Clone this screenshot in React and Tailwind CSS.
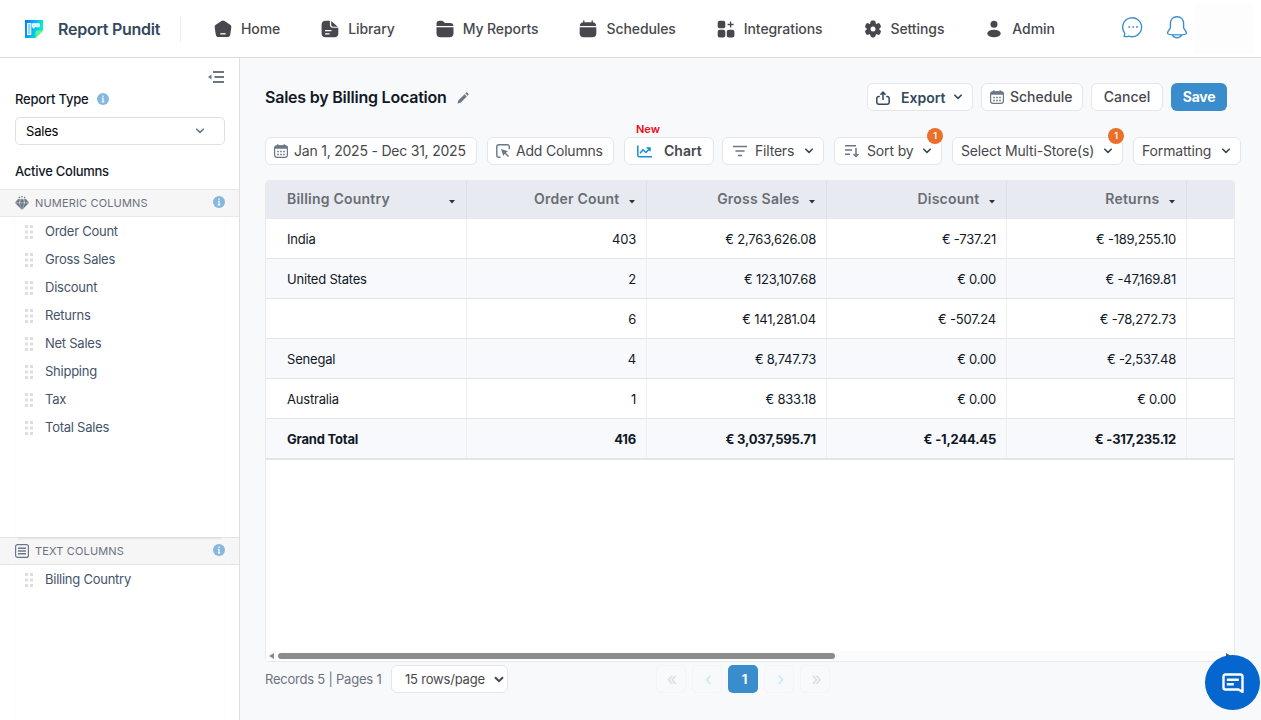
// src/App.jsx
import React, { useState } from 'react';

const NAV_ITEMS = [
  { label: 'Home', icon: HomeIcon },
  { label: 'Library', icon: LibraryIcon },
  { label: 'My Reports', icon: FolderIcon },
  { label: 'Schedules', icon: ScheduleIcon },
  { label: 'Integrations', icon: IntegrationsIcon },
  { label: 'Settings', icon: SettingsIcon },
  { label: 'Admin', icon: AdminIcon },
];

const NUMERIC_COLUMNS = ['Order Count', 'Gross Sales', 'Discount', 'Returns', 'Net Sales', 'Shipping', 'Tax', 'Total Sales'];

const HEADERS = ['Billing Country', 'Order Count', 'Gross Sales', 'Discount', 'Returns'];

const ROWS = [
  ['India', '403', '€ 2,763,626.08', '€ -737.21', '€ -189,255.10'],
  ['United States', '2', '€ 123,107.68', '€ 0.00', '€ -47,169.81'],
  ['', '6', '€ 141,281.04', '€ -507.24', '€ -78,272.73'],
  ['Senegal', '4', '€ 8,747.73', '€ 0.00', '€ -2,537.48'],
  ['Australia', '1', '€ 833.18', '€ 0.00', '€ 0.00'],
  ['Grand Total', '416', '€ 3,037,595.71', '€ -1,244.45', '€ -317,235.12'],
];

function HomeIcon() {
  return (
    <svg width="18" height="18" viewBox="0 0 18 18">
      <path d="M7.500 1a2.600 2.600 0 0 1 3 0l5.700 3.700c.9.600 1.300 1.500 1.100 2.600l-1 6.900a3.300 3.300 0 0 1-3.300 2.900H5a3.300 3.300 0 0 1-3.300-2.900L.7 7.300c-.2-1.100.2-2 1.100-2.600z" fill="#47484d" />
      <path d="M6.300 13.800h5.400" stroke="#fff" strokeWidth="1.300" />
    </svg>
  );
}

function LibraryIcon() {
  return (
    <svg width="18" height="18" viewBox="0 0 18 18">
      <path d="M4.500.7h4.400v4.100c0 2.100 1 3 3 3h5.400v5.700c0 2.500-1.300 3.700-3.700 3.700H4.500C2.100 17.200.6 16 .6 13.500v-9C.6 2 2.100.7 4.500.7z" fill="#47484d" />
      <path d="M10.200 1.100l6.600 5.600h-4.400c-1.500 0-2.200-.7-2.200-2.200z" fill="#47484d" />
      <path d="M4 10.600h6.500M4 13.800h4.500" stroke="#fff" strokeWidth="1.300" />
    </svg>
  );
}

function FolderIcon() {
  return (
    <svg width="18" height="18" viewBox="0 0 18 18">
      <path d="M.5 6V3.600C.5 1.800 1.500.7 3.400.7h2c1 0 1.700.4 2.300 1.100l1 1.300h5.600c2 0 3.200 1 3.200 2.900z" fill="#47484d" />
      <path d="M.5 7.200h17v6c0 2.700-1.300 4-4 4h-9c-2.700 0-4-1.300-4-4z" fill="#47484d" />
    </svg>
  );
}

function ScheduleIcon() {
  return (
    <svg width="18" height="18" viewBox="0 0 18 18">
      <path d="M.8 6C.8 3.500 2.200 2.200 4.600 2.200h8.800c2.400 0 3.800 1.300 3.800 3.800z" fill="#47484d" />
      <path d="M.7 7.200h16.600v6c0 2.700-1.300 4-4 4H4.700c-2.700 0-4-1.300-4-4z" fill="#47484d" />
      <path d="M4.800.8v2M13.200.8v2" stroke="#47484d" strokeWidth="1.300" strokeLinecap="round" />
    </svg>
  );
}

function IntegrationsIcon() {
  return (
    <svg width="18" height="18" viewBox="0 0 18 18" fill="#47484d">
      <rect x=".7" y=".7" width="7.600" height="7.600" rx="2" />
      <rect x=".7" y="9.800" width="7.600" height="7.600" rx="2" />
      <rect x="9.800" y="9.800" width="7.600" height="7.600" rx="2" />
      <path d="M13.600 1.500v6M10.600 4.500h6" stroke="#47484d" strokeWidth="1.300" />
    </svg>
  );
}

function SettingsIcon() {
  return (
    <svg width="18" height="18" viewBox="0 0 18 18">
      <g fill="#47484d">
        <circle cx="9" cy="9" r="6.300" />
        <rect x="6.400" y=".6" width="5.200" height="16.800" rx="1.800" />
        <rect x="6.400" y=".6" width="5.200" height="16.800" rx="1.800" transform="rotate(60 9 9)" />
        <rect x="6.400" y=".6" width="5.200" height="16.800" rx="1.800" transform="rotate(120 9 9)" />
      </g>
      <circle cx="9" cy="9" r="2.500" fill="#fff" />
    </svg>
  );
}

function AdminIcon() {
  return (
    <svg width="18" height="18" viewBox="0 0 18 18" fill="#47484d">
      <circle cx="9" cy="4.200" r="3.500" />
      <ellipse cx="9" cy="13.500" rx="6.700" ry="3.800" />
    </svg>
  );
}

function CalendarIcon() {
  return (
    <svg width="14" height="14" viewBox="0 0 14 14" className="shrink-0">
      <rect x=".6" y="1.800" width="12.800" height="11.500" rx="2.200" fill="none" stroke="#6b7785" strokeWidth="1.200" />
      <path d="M.5 4.800V3.500C.5 2.500 1.300 1.600 2.500 1.600h9c1.200 0 2 .9 2 1.900v1.300z" fill="#6b7785" />
      <path d="M3.800.3v2M10.200.3v2" stroke="#6b7785" strokeWidth="1.300" />
      <path d="M3.200 7.600h8M3.200 10.400h8" stroke="#6b7785" strokeWidth="1.500" strokeDasharray="1.600 1.400" />
    </svg>
  );
}

function ChevronDown({ color = '#34495e' }) {
  return (
    <svg width="8" height="6" viewBox="0 0 8 6" fill="none" className="shrink-0">
      <path d="M.8 1.200L4 4.400l3.200-3.200" stroke={color} strokeWidth="1.600" strokeLinecap="round" strokeLinejoin="round" />
    </svg>
  );
}

function InfoIcon() {
  return (
    <svg width="12" height="12" viewBox="0 0 12 12" className="shrink-0">
      <circle cx="6" cy="6" r="6" fill="#85b7df" />
      <path d="M6 2.500v1.400M5 5.300h1v3.400M4.800 8.900h2.500" stroke="#fff" strokeWidth="1.200" fill="none" />
    </svg>
  );
}

function Badge() {
  return (
    <span className="absolute -top-[10px] -right-0.5 flex h-4 w-4 items-center justify-center rounded-full bg-[#e96f2b] text-[9px] font-semibold text-white">
      1
    </span>
  );
}

const TopBar = () => (
  <header className="flex h-[58px] shrink-0 items-center border-b border-[#dcdcdc] bg-white">
    <div className="flex h-[26px] w-[181px] items-center border-r border-[#ececec] pl-[25px]">
      <svg width="18" height="18" viewBox="0 0 18 18">
        <defs>
          <linearGradient id="brand" x1="0" y1="0" x2="1" y2="0.300">
            <stop offset="0" stopColor="#0877ff" />
            <stop offset=".55" stopColor="#05b6f5" />
            <stop offset="1" stopColor="#08f0d2" />
          </linearGradient>
        </defs>
        <path d="M0 0h18v10.500L10.500 18H0z" fill="url(#brand)" />
        <path d="M10.500 18v-5.500q0-2 2-2H18z" fill="#5df57c" />
        <rect x="2.600" y="3.500" width="3.200" height="11" fill="#8fd0ff" stroke="#fff" strokeWidth="1" />
        <path d="M7.300 7V3.800h7v2.900h-4q-1.400 0-1.400 1.500z" fill="#c9f6ff" stroke="#fff" strokeWidth="1" />
      </svg>
      <span className="ml-[15px] whitespace-nowrap text-[16px] font-semibold tracking-[-0.26px] text-[#34495e]">Report Pundit</span>
    </div>
    <nav className="ml-[33px] flex items-center gap-[41px]">
      {NAV_ITEMS.map(({ label, icon: Icon }) => (
        <a key={label} href="#" className="flex items-center gap-[9px] whitespace-nowrap text-[14px] font-medium tracking-[-0.09px] text-[#47484d]">
          <Icon />
          {label}
        </a>
      ))}
    </nav>
    <div className="ml-auto flex h-full items-center gap-[22px]">
      <svg width="22" height="22" viewBox="0 0 24 24" fill="none" className="-mt-[3px]">
        <path d="M2.200 22.300c.9-1.300.9-2.700.4-4.200A10.300 10.300 0 1 1 7.500 21.900c-1.700.8-3.300.8-5.300.4z" stroke="#3a8fd1" strokeWidth="1.500" strokeLinejoin="round" />
        <path d="M7 12h2M11.200 12h2M15.400 12h2" stroke="#3a8fd1" strokeWidth="1.700" />
      </svg>
      <svg width="22" height="24" viewBox="0 0 22 24" fill="none" className="-mt-[3px]">
        <path d="M11 1.800c-4.200 0-6.600 3-6.600 7v3.700c0 1.500-2.900 3.700-2.900 5.700 0 1 3.500 1.700 9.500 1.700s9.500-.7 9.500-1.700c0-2-2.900-4.200-2.900-5.700V8.800c0-4-2.400-7-6.600-7z" stroke="#3a8fd1" strokeWidth="1.400" />
        <path d="M6.500 20c.6 1.600 2.200 2.700 4.500 2.700s3.900-1.100 4.500-2.700" stroke="#3a8fd1" strokeWidth="1.400" />
      </svg>
      <div className="-ml-[16px] mr-[7px] h-[50px] w-[60px] bg-[#fdfdfd]"></div>
    </div>
  </header>
);

const ColumnItem = ({ name }) => (
  <li className="flex h-7 items-center pl-[9px] text-[13px] tracking-[-0.25px] text-[#44546a]">
    <svg width="8" height="14" viewBox="0 0 8 14" fill="#dedede" className="mt-px mr-3 shrink-0">
      <path d="M0 0h3v3H0zM5 0h3v3H5zM0 5.500h3v3H0zM5 5.500h3v3H5zM0 11h3v3H0zM5 11h3v3H5z" />
    </svg>
    <span className="pt-0.5">{name}</span>
  </li>
);

const Sidebar = () => (
  <aside className="flex w-60 shrink-0 flex-col border-r border-[#dcdfe3] bg-white">
    <div className="flex h-[26px] items-end justify-end pr-[15px]">
      <svg width="16" height="14" viewBox="0 0 16 14">
        <path d="M5 2h11M6.500 7H16M5 12h11" stroke="#6b7785" strokeWidth="1.800" />
        <path d="M3.500 4.500v5L0 7z" fill="#6b7785" />
      </svg>
    </div>
    <div className="mt-[5px] flex h-5 items-center px-[15px] text-[13px] font-medium tracking-[-0.2px] text-[#111827]">
      <span className="mr-2 pt-0.5">Report Type</span>
      <InfoIcon />
    </div>
    <button className="mr-[14px] ml-[15px] mt-2 flex h-7 items-center justify-between rounded-[5px] border border-[#dcdfe3] pr-5 pl-2.5 text-[13px] tracking-[-0.2px] text-black">
      <span className="pt-0.5">Sales</span>
      <ChevronDown color="#6b7785" />
    </button>
    <div className="mt-4 flex h-5 items-center px-[15px] pt-0.5 text-[13px] font-medium tracking-[-0.26px] text-[#111827]">Active Columns</div>
    <div className="mt-2 flex h-7 shrink-0 items-center border-y border-[#e9e9e9] bg-[#f6f6f6] pr-[14px] pl-[15px] text-[11px] tracking-[0.16px] text-[#6b7280]">
      <svg width="14" height="14" viewBox="0 0 14 14" className="mr-1.5">
        <path d="M3 3.200h2L4 6.500H.3zM5.800 3.200h2.400l.8 3.300H5zM9 3.200h2l2.700 3.300H10zM.5 7.200H4.200L6.300 13zM4.900 7.200h4.200L7 13.800zM9.800 7.200h3.700L7.700 13z" fill="#6b7785" stroke="#6b7785" strokeWidth=".3" />
        <path d="M4.300.8v1.500M7 0v1.500M9.700.8v1.500" stroke="#6b7785" strokeWidth="1.200" />
      </svg>
      <span className="flex-1">NUMERIC COLUMNS</span>
      <span className="-mt-0.5"><InfoIcon /></span>
    </div>
    <ul className="mr-[14px] ml-[15px] h-80 border-x border-[#fcfcfc]">
      {NUMERIC_COLUMNS.map((name) => (
        <ColumnItem key={name} name={name} />
      ))}
    </ul>
    <div className="relative flex h-7 shrink-0 items-center border-y border-[#e4e4e4] bg-[#f6f6f6] pr-[14px] pl-[15px] text-[11px] tracking-[0.16px] text-[#6b7280]">
      <div className="absolute -top-px right-[18px] left-[18px] h-[3px] bg-linear-to-b from-[#d9d9d9] to-[#f6f6f6]"></div>
      <svg width="14" height="14" viewBox="0 0 14 14" fill="none" stroke="#6b7785" className="mr-1.5">
        <rect x=".6" y=".6" width="12.800" height="12.800" rx="2" strokeWidth="1.200" />
        <path d="M3 4.200h8M3 7h8M3 9.800h8" strokeWidth="1.500" />
      </svg>
      <span className="flex-1">TEXT COLUMNS</span>
      <span className="-mt-0.5"><InfoIcon /></span>
    </div>
    <ul className="mr-[14px] ml-[15px] flex-1 border-x border-[#fcfcfc]">
      <ColumnItem name="Billing Country" />
    </ul>
  </aside>
);

const BUTTON = 'relative flex h-7 shrink-0 items-center whitespace-nowrap rounded-[6px] border border-[#e4e6e9] bg-white text-[14px]';

const TitleRow = () => (
  <div className="flex h-7 items-center pr-[34px]">
    <h1 className="text-[16px] font-semibold tracking-[-0.22px] text-[#111827]">Sales by Billing Location</h1>
    <svg width="12" height="12" viewBox="0 0 12 12" fill="#6b7785" className="mt-0.5 ml-2.5">
      <path d="M.5 11.500l.8-3L7.600 2.200l2.200 2.200-6.300 6.300zM8.300 1.500l.9-.9q.5-.4 1 0l1.200 1.200q.4.5 0 1l-.9.900z" />
    </svg>
    <div className="ml-auto flex gap-2">
      <button className={`${BUTTON} w-[106px] pl-2 font-semibold text-[#34495e]`}>
        <svg width="14" height="14" viewBox="0 0 14 14" fill="none" stroke="#34495e" strokeWidth="1.500" className="mt-0.5 mr-[11px]">
          <path d="M3.800 5.500H3C1.500 5.500.8 6.300.8 7.700v3.200c0 1.500.8 2.300 2.300 2.300h7.800c1.500 0 2.300-.8 2.300-2.300V7.700c0-1.400-.7-2.200-2.200-2.200h-.8" />
          <path d="M7 9V1.500M4.500 3.800L7 1.200l2.500 2.600" />
        </svg>
        <span className="mr-[9px]">Export</span>
        <ChevronDown />
      </button>
      <button className={`${BUTTON} w-[102px] pb-0.5 pl-2 font-medium text-[#47484d]`}>
        <span className="mt-0.5 mr-1.5"><CalendarIcon /></span>
        Schedule
      </button>
      <button className={`${BUTTON} w-[72px] justify-center pb-0.5 font-medium text-[#47484d]`}>Cancel</button>
      <button className="h-7 w-14 rounded-[6px] bg-[#3a8dcd] pb-0.5 text-[14px] font-bold tracking-[-0.3px] text-white">Save</button>
    </div>
  </div>
);

const Toolbar = () => (
  <div className="mt-[26px] flex h-7 text-[#47484d]">
    <button className={`${BUTTON} mr-2.5 w-[212px] pl-2 tracking-[-0.22px]`}>
      <span className="mr-1.5"><CalendarIcon /></span>
      <span className="pb-0.5">Jan 1, 2025 - Dec 31, 2025</span>
    </button>
    <button className={`${BUTTON} mr-2.5 w-[127px] pl-2 tracking-[-0.2px]`}>
      <svg width="14" height="14" viewBox="0 0 14 14" className="mr-1.5">
        <path d="M4.500 13.300H2.800q-2 0-2-2V2.800q0-2 2-2h8.500q2 0 2 2v2.500" fill="none" stroke="#6b7785" strokeWidth="1.400" />
        <path d="M5 5l7 2.300-2.200 1.400 3.200 3.300-1 1-3.200-3.300-1.500 2.300z" fill="#6b7785" />
      </svg>
      <span className="pb-0.5">Add Columns</span>
    </button>
    <button className={`${BUTTON} mr-2 w-[90px] pl-3 font-semibold`}>
      <span className="absolute -top-[17px] left-[11px] text-[11px] leading-4 font-semibold text-[#f00a14]">New</span>
      <svg width="15" height="13" viewBox="0 0 15 13" fill="none" stroke="#168dd5" strokeWidth="1.500" className="mr-3">
        <path d="M.8.5v9.700q0 1.600 1.600 1.600H15" />
        <path d="M3 8.300l3-3.500 3 2.700 3.800-4.200M9.500 3h3.500v3.200" />
      </svg>
      <span className="pb-0.5">Chart</span>
    </button>
    <button className={`${BUTTON} mr-2.5 w-[102px] pl-2.5 tracking-[-0.2px]`}>
      <svg width="14" height="12" viewBox="0 0 14 12" stroke="#6b7785" strokeWidth="1.500" className="mr-2">
        <path d="M0 1.500h14M2.500 6h9M5 10.500h4" />
      </svg>
      <span className="mr-[11px] pb-0.5">Filters</span>
      <ChevronDown />
    </button>
    <button className={`${BUTTON} mr-2.5 w-[108px] pl-2.5 tracking-[-0.15px]`}>
      <svg width="14" height="14" viewBox="0 0 14 14" fill="none" stroke="#6b7785" strokeWidth="1.500" className="mr-2">
        <path d="M0 1.800h11M0 6h7M0 10.200h5M11 4v8M8.500 10l2.500 2.500 2.500-2.500" />
      </svg>
      <span className="mr-[9px] pb-0.5">Sort by</span>
      <ChevronDown />
      <Badge />
    </button>
    <button className={`${BUTTON} mr-2.5 w-[171px] pl-2 tracking-[-0.17px]`}>
      <span className="mr-2.5 pb-0.5">Select Multi-Store(s)</span>
      <ChevronDown />
      <Badge />
    </button>
    <button className={`${BUTTON} w-[108px] pl-2 tracking-[-0.15px]`}>
      <span className="mr-[11px] pb-0.5">Formatting</span>
      <ChevronDown />
    </button>
  </div>
);

const ReportTable = () => (
  <div className="mt-[15px] flex h-[482px] w-[970px] flex-col overflow-hidden rounded-[4px] border border-[#e8eaed] bg-white">
    <div className="flex h-[38px] shrink-0 bg-[#e7eaf1] pl-px">
      {HEADERS.map((header, i) => (
        <div
          key={header}
          className={`flex items-center border-r border-[#dfe0e3] text-[14px] font-semibold tracking-[0.22px] text-[#6a6d73] ${
            i === 0 ? 'w-[200px] justify-between pr-[11px] pl-5' : 'w-[180px] justify-end pr-[11px]'
          }`}
        >
          <span className="pb-[3px]">{header}</span>
          <svg width="6" height="4" viewBox="0 0 6 4" className="mt-1 ml-[9.5px]">
            <path d="M0 0h6L3 3.500z" fill="#333" />
          </svg>
        </div>
      ))}
    </div>
    {ROWS.map((row, r) => (
      <div
        key={r}
        className={`flex shrink-0 border-[#e3e4e6] pl-px text-[13px] tracking-[-0.2px] text-[#111827] ${r % 2 ? 'bg-[#f7f9fc]' : 'bg-white'} ${
          r === ROWS.length - 1 ? 'h-[41px] border-b-2 font-bold' : 'h-10 border-b'
        }`}
      >
        {row.map((cell, i) => (
          <div key={i} className={`flex items-center border-r border-[#f0f0f1] pt-0.5 ${i === 0 ? 'w-[200px] pl-5' : 'w-[180px] justify-end pr-[10px]'}`}>
            {cell}
          </div>
        ))}
      </div>
    ))}
    <div className="mt-auto flex h-[10px] items-center bg-[#fcfcfc] px-[3px]">
      <svg width="5" height="6" viewBox="0 0 5 6">
        <path d="M5 0v6L0 3z" fill="#8b8b8b" />
      </svg>
      <div className="ml-1 h-1.5 w-[557px] rounded-full bg-[#8b8b8b]"></div>
      <svg width="5" height="6" viewBox="0 0 5 6" className="ml-auto">
        <path d="M0 0v6l5-3z" fill="#555" />
      </svg>
    </div>
  </div>
);

const Footer = ({ page, setPage }) => (
  <div className="mt-[3px] flex h-7 items-center text-[13px] tracking-[-0.22px] text-[#6b7280]">
    <span className="w-[126px] whitespace-nowrap pt-0.5">Records 5 | Pages 1</span>
    <button className="flex h-7 w-[117px] items-center justify-between rounded-[6px] border border-[#e4e6e9] bg-white pr-[3px] pl-[13px] tracking-[-0.2px] text-[#47484d]">
      <span className="pt-0.5">15 rows/page</span>
      <svg width="10" height="7" viewBox="0 0 10 7" fill="none">
        <path d="M1 1.200l4 4 4-4" stroke="#47484d" strokeWidth="2" />
      </svg>
    </button>
    <div className="ml-[148px] flex gap-1.5">
      <button className="h-7 w-[30px] rounded-[5px] border border-[#f4f5f7] pl-0.5 text-[18px] leading-5 text-[#dcdfe3]">«</button>
      <button className="h-7 w-[30px] rounded-[5px] border border-[#f4f5f7] pl-0.5 text-[18px] leading-5 text-[#d0e4f5]">‹</button>
      <button onClick={() => setPage(1)} className="h-7 w-[30px] rounded-[5px] bg-[#3a8dcd] pt-0.5 pl-[3px] font-bold text-white">{page}</button>
      <button className="h-7 w-[30px] rounded-[5px] border border-[#f4f5f7] pl-[3px] text-[18px] leading-5 text-[#d0e4f5]">›</button>
      <button className="h-7 w-[30px] rounded-[5px] border border-[#f4f5f7] pl-[3px] text-[18px] leading-5 text-[#dcdfe3]">»</button>
    </div>
  </div>
);

const App = () => {
  const [page, setPage] = useState(1);

  return (
    <div className="relative flex h-[720px] w-[1261px] flex-col overflow-hidden bg-[#f8f9fb] font-['Inter',sans-serif]">
      <TopBar />
      <div className="flex flex-1">
        <Sidebar />
        <main className="flex-1 pt-[25px] pl-[25px]">
          <TitleRow />
          <Toolbar />
          <ReportTable />
          <Footer page={page} setPage={setPage} />
        </main>
      </div>
      <button className="absolute right-px bottom-[10px] flex h-[55px] w-[55px] items-center justify-center rounded-full bg-[#0566cf]">
        <svg width="22" height="20" viewBox="0 0 22 20" fill="none" stroke="#fff" strokeWidth="2.400">
          <path d="M20.500 19V3.500q0-2-2-2H3.500q-2 0-2 2v11q0 2 2 2h13z" strokeLinejoin="round" />
          <path d="M4.800 6.800h12M4.800 11.200h7" />
        </svg>
      </button>
    </div>
  );
};

export default App;
